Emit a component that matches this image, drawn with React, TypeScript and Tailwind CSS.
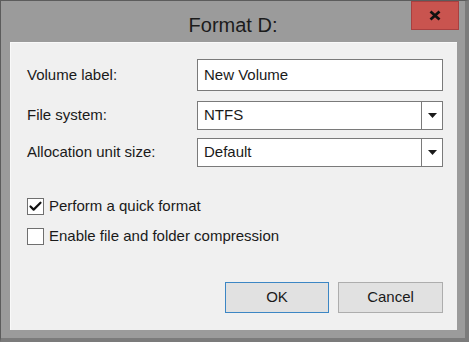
import { Check } from 'lucide-react'

function ComboBox({ value }: { value: string }) {
  return (
    <div className="flex h-[29px] flex-1 items-stretch border border-[#7a7a7a] bg-white">
      <div className="flex flex-1 items-center pl-[6px]">{value}</div>
      <div className="flex w-[21px] items-center justify-center border-l border-[#7a7a7a]">
        <svg width="9" height="5" viewBox="0 0 9 5">
          <path d="M0 0H9L4.5 5Z" fill="#1a1a1a" />
        </svg>
      </div>
    </div>
  )
}

function CheckBox({ checked, label }: { checked: boolean; label: string }) {
  return (
    <label className="flex h-[18px] items-center gap-[5px]">
      <span className="flex h-[17px] w-[17px] items-center justify-center border border-[#6f6f6f] bg-white">
        {checked && <Check size={15} strokeWidth={3.5} className="text-[#111]" />}
      </span>
      <span>{label}</span>
    </label>
  )
}

export default function App() {
  return (
    <div
      className="flex h-[342px] w-[469px] flex-col border-t border-l border-[#5c5c5c] border-r-4 border-b-4 border-r-[#7b7b7b] border-b-[#7b7b7b] bg-[#9b9b9b] text-[#1a1a1a]"
      style={{ fontFamily: '"Liberation Sans", Arial, sans-serif' }}
    >
      {/* Title bar */}
      <div className="grid h-[41px] shrink-0 grid-cols-[1fr_auto_1fr]">
        <div />
        <div className="pt-[9px] text-[20px] text-[#1c1c1c]">Format D:</div>
        <div className="flex justify-end pr-[6px]">
          <div className="flex h-[29px] w-[48px] items-center justify-center border border-[#a84040] bg-[#c9544f]">
            <svg width="12" height="11" viewBox="0 0 12 11">
              <path d="M1.5 1.5L10.5 9.5M10.5 1.5L1.5 9.5" stroke="#111" strokeWidth="2.8" />
            </svg>
          </div>
        </div>
      </div>

      {/* Client area */}
      <div className="ml-[9px] mr-[8px] flex flex-1 flex-col border-l border-t border-[#f9f9f9] bg-[#f0f0f0] pl-[16px] pr-[14px] pt-[16px] text-[15px]">
        <div className="flex h-[32px] items-center">
          <div className="w-[170px]">Volume label:</div>
          <div className="flex h-[32px] flex-1 items-center border border-[#7a7a7a] bg-white pl-[6px]">
            New Volume
          </div>
        </div>
        <div className="mt-[10px] flex items-center">
          <div className="w-[170px]">File system:</div>
          <ComboBox value="NTFS" />
        </div>
        <div className="mt-[8px] flex items-center">
          <div className="w-[170px]">Allocation unit size:</div>
          <ComboBox value="Default" />
        </div>

        <div className="mt-[30px] flex flex-col gap-[12px]">
          <CheckBox checked label="Perform a quick format" />
          <CheckBox checked={false} label="Enable file and folder compression" />
        </div>

        <div className="mt-auto mb-[17px] flex justify-end gap-[9px]">
          <button className="h-[31px] w-[104px] border border-[#3c86c4] bg-[#e1e1e1] text-[15px] text-[#1a1a1a]">
            OK
          </button>
          <button className="h-[31px] w-[105px] border border-[#adadad] bg-[#e1e1e1] text-[15px] text-[#1a1a1a]">
            Cancel
          </button>
        </div>
      </div>
      <div className="h-[8px] shrink-0" />
    </div>
  )
}
